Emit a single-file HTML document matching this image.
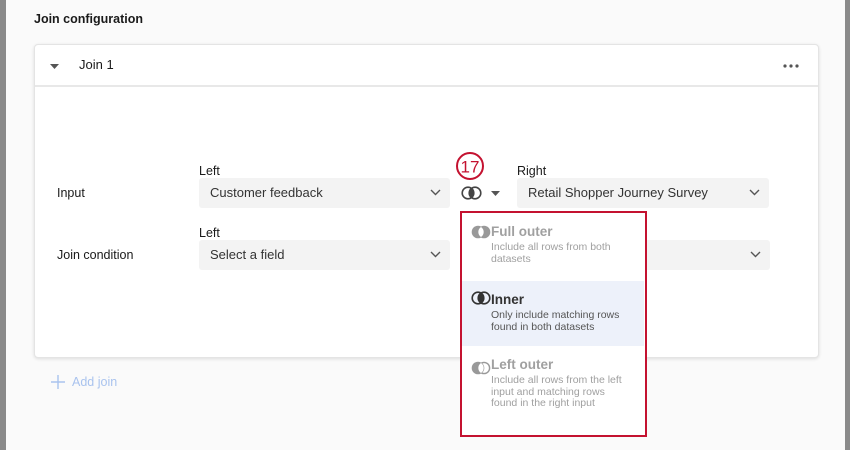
<!DOCTYPE html>
<html><head><style>
*{box-sizing:border-box;margin:0;padding:0}
body{width:850px;height:450px;overflow:hidden;background:#fafafa;font-family:"Liberation Sans",sans-serif;position:relative;color:#1a1a1a}
.lb{position:absolute;left:0;top:0;width:6px;height:450px;background:#8a8a8a}
.rb{position:absolute;left:845px;top:0;width:5px;height:450px;background:#8a8a8a}
.abs{position:absolute}
.card{position:absolute;left:34px;top:44px;width:785px;height:314px;background:#fff;border:1px solid #e4e4e4;border-radius:4px;box-shadow:0 1px 3px rgba(0,0,0,.12)}
.hdr{position:absolute;left:0;top:0;width:100%;height:42px;border-bottom:2px solid #e8e8e8}
.sel{position:absolute;height:30px;background:#f3f3f3;border-radius:3px;font-size:13px;color:#333;padding-left:11px;line-height:30px}
.chev{position:absolute;right:9px;top:9px}
.lab{position:absolute;font-size:12.5px;color:#1a1a1a}
.dd{position:absolute;left:460px;top:211px;width:187px;height:226px;background:#fff;border:2.5px solid #c41230}
.opt{position:absolute;left:0;width:182px;height:65px}
.opt b{position:absolute;left:29px;top:11px;font-size:13.5px}
.opt p{position:absolute;left:29px;top:29px;font-size:10.5px;line-height:11.5px;width:138px}
.gray b,.gray p{color:#a0a0a0}
</style></head><body>
<div class="lb"></div><div class="rb"></div>
<div class="abs" style="left:34px;top:12px;font-size:12.5px;font-weight:bold">Join configuration</div>
<div class="card">
 <div class="hdr">
  <svg class="abs" style="left:15px;top:19px" width="9" height="5"><path d="M0 0h9L4.5 5z" fill="#555"/></svg>
  <div class="abs" style="left:44px;top:12px;font-size:13px">Join 1</div>
  <svg class="abs" style="left:748px;top:19px" width="16" height="4"><circle cx="2" cy="2" r="1.6" fill="#555"/><circle cx="8" cy="2" r="1.6" fill="#555"/><circle cx="14" cy="2" r="1.6" fill="#555"/></svg>
 </div>
</div>
<div class="lab" style="left:199px;top:164px">Left</div>
<div class="lab" style="left:57px;top:186px">Input</div>
<div class="sel" style="left:199px;top:178px;width:251px">Customer feedback<svg class="chev" width="11" height="11"><path d="M1 3l4.5 4.5L10 3" stroke="#555" stroke-width="1.4" fill="none"/></svg></div>
<div class="lab" style="left:517px;top:164px">Right</div>
<div class="sel" style="left:517px;top:178px;width:252px">Retail Shopper Journey Survey<svg class="chev" width="11" height="11"><path d="M1 3l4.5 4.5L10 3" stroke="#555" stroke-width="1.4" fill="none"/></svg></div>
<div class="lab" style="left:199px;top:226px">Left</div>
<div class="lab" style="left:57px;top:248px">Join condition</div>
<div class="sel" style="left:199px;top:240px;width:251px">Select a field<svg class="chev" width="11" height="11"><path d="M1 3l4.5 4.5L10 3" stroke="#555" stroke-width="1.4" fill="none"/></svg></div>
<div class="sel" style="left:640px;top:240px;width:130px"><svg class="chev" width="11" height="11"><path d="M1 3l4.5 4.5L10 3" stroke="#555" stroke-width="1.4" fill="none"/></svg></div>
<svg class="abs" style="left:455px;top:151px" width="30" height="30"><circle cx="15" cy="15" r="13" fill="#fff" stroke="#c41230" stroke-width="2"/><text x="15" y="21.5" font-size="17" text-anchor="middle" fill="#c41230" font-family="Liberation Sans">17</text></svg>
<svg class="abs" style="left:461px;top:186px" width="22" height="14"><circle cx="7" cy="7" r="5.8" fill="none" stroke="#444" stroke-width="1.6"/><circle cx="14" cy="7" r="5.8" fill="none" stroke="#444" stroke-width="1.6"/><path d="M10.5 2.4a5.8 5.8 0 0 1 0 9.2a5.8 5.8 0 0 1 0-9.2z" fill="#444"/></svg>
<svg class="abs" style="left:491px;top:191px" width="9" height="5"><path d="M0 0h9L4.5 5z" fill="#555"/></svg>
<div class="dd">
 <div class="opt gray" style="top:0">
  <svg class="abs" style="left:9px;top:12px" width="20" height="14"><circle cx="7" cy="7" r="6.3" fill="#999"/><circle cx="13" cy="7" r="6.3" fill="#999"/><path d="M10 2a6 6 0 0 1 0 10a6 6 0 0 1 0-10z" fill="#fff"/></svg>
  <b>Full outer</b><p>Include all rows from both datasets</p></div>
 <div class="opt" style="top:68px;background:#edf1fa">
  <svg class="abs" style="left:9px;top:10px" width="20" height="14"><circle cx="7" cy="7" r="5.8" fill="none" stroke="#333" stroke-width="1.6"/><circle cx="13" cy="7" r="5.8" fill="none" stroke="#333" stroke-width="1.6"/><path d="M10 2.2a5.8 5.8 0 0 1 0 9.6a5.8 5.8 0 0 1 0-9.6z" fill="#333"/></svg>
  <b style="color:#333">Inner</b><p style="color:#555">Only include matching rows found in both datasets</p></div>
 <div class="opt gray" style="top:133px">
  <svg class="abs" style="left:9px;top:15px" width="20" height="14"><circle cx="7" cy="7" r="6.3" fill="#999"/><circle cx="13" cy="7" r="5.6" fill="none" stroke="#999" stroke-width="1.4"/><path d="M10 2a6 6 0 0 1 0 10a6 6 0 0 1 0-10z" fill="#fff"/></svg>
  <b>Left outer</b><p>Include all rows from the left input and matching rows found in the right input</p></div>
</div>
<svg class="abs" style="left:51px;top:375px" width="14" height="14"><path d="M7 0v14M0 7h14" stroke="#a9c3ee" stroke-width="1.4"/></svg>
<div class="abs" style="left:72px;top:375px;font-size:12.5px;color:#a9c3ee">Add join</div>
</body></html>
